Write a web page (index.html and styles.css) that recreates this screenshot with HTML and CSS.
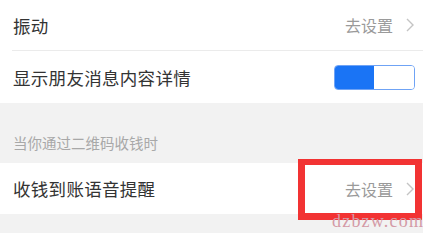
FILE: index.html
```html
<!DOCTYPE html>
<html lang="zh">
<head>
<meta charset="utf-8">
<link rel="stylesheet" href="styles.css">
</head>
<body>
<div class="page">
  <div class="group">
    <div class="row row-first">
      <span class="label">振动</span>
      <span class="action">去设置<svg class="chev" width="8" height="14" viewBox="0 0 8 14"><path d="M1 1l6 6-6 6" fill="none" stroke="#c4c4c4" stroke-width="1.4"/></svg></span>
    </div>
    <div class="row row-second">
      <span class="label">显示朋友消息内容详情</span>
      <span class="toggle"><span class="toggle-on"></span><span class="toggle-off"></span></span>
    </div>
  </div>
  <div class="caption">当你通过二维码收钱时</div>
  <div class="group">
    <div class="row row-third">
      <span class="label">收钱到账语音提醒</span>
      <span class="action">去设置<svg class="chev" width="8" height="14" viewBox="0 0 8 14"><path d="M1 1l6 6-6 6" fill="none" stroke="#c4c4c4" stroke-width="1.4"/></svg></span>
    </div>
  </div>
  <div class="highlight"></div>
  <div class="watermark">dzbzw.com</div>
</div>
</body>
</html>
```
FILE: styles.css
```css
html, body {
  margin: 0;
  padding: 0;
}
body {
  background: #f2f2f2;
  font-family: "Noto Sans CJK SC", "Noto Sans", sans-serif;
  width: 423px;
  height: 233px;
  overflow: hidden;
}
.page {
  position: relative;
  height: 233px;
}
.group {
  background: #fff;
}
.row {
  display: flex;
  align-items: center;
  justify-content: space-between;
  padding: 0 9px 0 13px;
}
.row-first {
  height: 50px;
  position: relative;
}
.row-first::after {
  content: "";
  position: absolute;
  left: 12px;
  right: 0;
  bottom: -1px;
  height: 1px;
  background: #ebebeb;
}
.row-second {
  height: 52px;
  margin-top: 1px;
  padding-right: 8px;
}
.row-third {
  height: 51px;
}
.label {
  font-size: 17.5px;
  color: #333;
  letter-spacing: 0.3px;
}
.action {
  display: flex;
  align-items: center;
  font-size: 16px;
  color: #9a9a9a;
  gap: 13px;
}
.chev {
  display: block;
}
.toggle {
  display: flex;
  width: 81px;
  height: 25px;
  border-radius: 4px;
  overflow: hidden;
  box-sizing: border-box;
  border: 1.5px solid #6fa3f5;
}
.toggle-on {
  width: 39px;
  background: #1a74f5;
}
.toggle-off {
  flex: 1;
  background: #fff;
}
.caption {
  height: 60px;
  box-sizing: border-box;
  padding: 30px 0 0 13px;
  font-size: 14.5px;
  color: #a8a8a8;
  line-height: 20px;
}
.highlight {
  position: absolute;
  left: 298px;
  top: 159px;
  width: 124px;
  height: 61px;
  box-sizing: border-box;
  border: 7px solid #f23333;
  border-top-width: 6px;
}
.watermark {
  position: absolute;
  left: 332px;
  top: 210px;
  font-family: "Liberation Serif", serif;
  font-size: 18px;
  letter-spacing: 1.2px;
  color: #d49aa6;
  line-height: 22px;
  white-space: nowrap;
}
```
